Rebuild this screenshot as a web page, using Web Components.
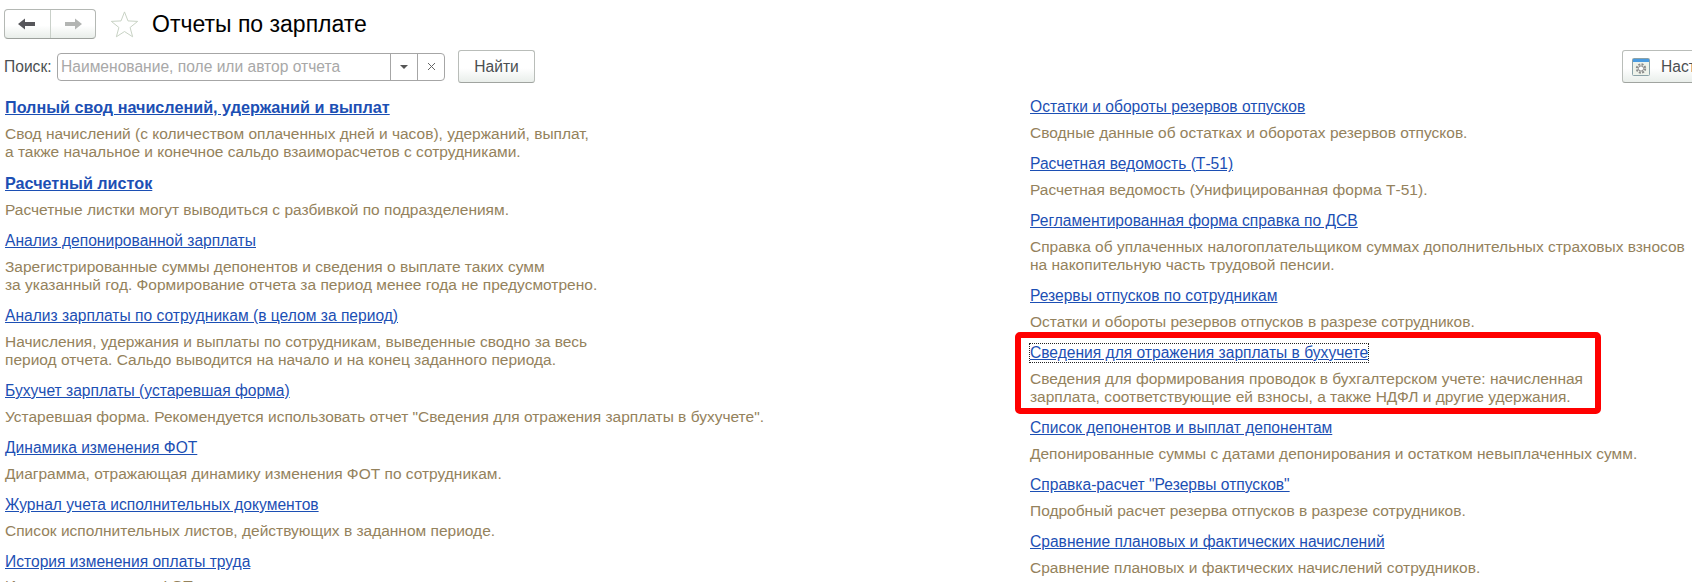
<!DOCTYPE html>
<html>
<head>
<meta charset="utf-8">
<title>Отчеты по зарплате</title>
<style>
    html, body { margin: 0; height: 582px; overflow: hidden; background: #fff; }
    body { font: 15.6px "Liberation Sans", Arial, sans-serif; }
</style>
</head>
<body>
<salary-page>
    <report-item slot="left" strong name="Полный свод начислений, удержаний и выплат">Свод начислений (с количеством оплаченных дней и часов), удержаний, выплат,<br>а также начальное и конечное сальдо взаиморасчетов с сотрудниками.</report-item>
    <report-item slot="left" strong name="Расчетный листок">Расчетные листки могут выводиться с разбивкой по подразделениям.</report-item>
    <report-item slot="left" name="Анализ депонированной зарплаты">Зарегистрированные суммы депонентов и сведения о выплате таких сумм<br>за указанный год. Формирование отчета за период менее года не предусмотрено.</report-item>
    <report-item slot="left" name="Анализ зарплаты по сотрудникам (в целом за период)">Начисления, удержания и выплаты по сотрудникам, выведенные сводно за весь<br>период отчета. Сальдо выводится на начало и на конец заданного периода.</report-item>
    <report-item slot="left" name="Бухучет зарплаты (устаревшая форма)">Устаревшая форма. Рекомендуется использовать отчет "Сведения для отражения зарплаты в бухучете".</report-item>
    <report-item slot="left" name="Динамика изменения ФОТ">Диаграмма, отражающая динамику изменения ФОТ по сотрудникам.</report-item>
    <report-item slot="left" name="Журнал учета исполнительных документов">Список исполнительных листов, действующих в заданном периоде.</report-item>
    <report-item slot="left" style="--desc-gap: 6px" name="История изменения оплаты труда">Изменения оплаты и ФОТ сотрудников.</report-item>

    <report-item slot="right" name="Остатки и обороты резервов отпусков">Сводные данные об остатках и оборотах резервов отпусков.</report-item>
    <report-item slot="right" name="Расчетная ведомость (Т-51)">Расчетная ведомость (Унифицированная форма Т-51).</report-item>
    <report-item slot="right" name="Регламентированная форма справка по ДСВ">Справка об уплаченных налогоплательщиком суммах дополнительных страховых взносов<br>на накопительную часть трудовой пенсии.</report-item>
    <report-item slot="right" name="Резервы отпусков по сотрудникам">Остатки и обороты резервов отпусков в разрезе сотрудников.</report-item>
    <report-item slot="right" focused marked name="Сведения для отражения зарплаты в бухучете">Сведения для формирования проводок в бухгалтерском учете: начисленная<br>зарплата, соответствующие ей взносы, а также НДФЛ и другие удержания.</report-item>
    <report-item slot="right" name="Список депонентов и выплат депонентам">Депонированные суммы с датами депонирования и остатком невыплаченных сумм.</report-item>
    <report-item slot="right" name="Справка-расчет &quot;Резервы отпусков&quot;">Подробный расчет резерва отпусков в разрезе сотрудников.</report-item>
    <report-item slot="right" name="Сравнение плановых и фактических начислений">Сравнение плановых и фактических начислений сотрудников.</report-item>
</salary-page>

<script>
const buttonGradient = 'linear-gradient(#fff 0%, #fff 55%, #e9eeea 100%)';

const navTemplate = document.createElement('template');
navTemplate.innerHTML = `
    <style>
        :host { display: flex; align-items: center; height: 48px; padding-left: 4px; box-sizing: border-box; }
        .nav { display: flex; width: 92px; height: 30px; box-sizing: border-box; border: 1px solid #b4b8b4; border-bottom-color: #9da19d; border-radius: 4px; background: ${buttonGradient}; }
        .nav div { flex: 1; display: flex; align-items: center; justify-content: center; }
        .nav div + div { border-left: 1px solid #c9d0c9; }
        .star { margin: 0 13px 0 14px; }
        h1 { margin: 0; font: 400 23px "Liberation Sans", Arial, sans-serif; color: #000; }
    </style>
    <div class="nav">
        <div><svg width="18" height="12" viewBox="0 0 18 12"><path d="M0 6 7 .5V4h10v4H7v3.5z" fill="#56565a"/></svg></div>
        <div><svg width="18" height="12" viewBox="0 0 18 12"><path d="M18 6 11 .5V4H1v4h10v3.5z" fill="#b3b5b3"/></svg></div>
    </div>
    <svg class="star" width="29" height="28" viewBox="0 0 30 28"><path d="M15 1.5 18.6 10.8 28.6 11.3 20.8 17.6 23.4 27.2 15 21.8 6.6 27.2 9.2 17.6 1.4 11.3 11.4 10.8z" fill="#fff" stroke="#c6d0c2"/></svg>
    <h1><slot></slot></h1>
`;

class TitleBar extends HTMLElement {
    constructor() {
        super();
        this.attachShadow({ mode: 'open' });
        this.shadowRoot.appendChild(navTemplate.content.cloneNode(true));
    }
}

const searchTemplate = document.createElement('template');
searchTemplate.innerHTML = `
    <style>
        :host { display: flex; align-items: center; height: 33px; margin-top: 2px; padding-left: 4px; font: 15.6px "Liberation Sans", Arial, sans-serif; color: #4b4f52; }
        label { width: 53px; }
        .field { display: flex; width: 388px; height: 28px; box-sizing: border-box; border: 1px solid #a6a6a6; border-radius: 4px; background: #fff; }
        .text { flex: 1; padding-left: 3px; line-height: 26px; color: #a8a8a8; }
        .cell { width: 26px; display: flex; align-items: center; justify-content: center; border-left: 1px solid #a6a6a6; }
        button { margin-left: 13px; width: 77px; height: 33px; padding: 0; border: 1px solid #b9bdb9; border-bottom-color: #a0a4a0; border-radius: 3px; font: inherit; color: #4b4f52; background: ${buttonGradient}; }
        .settings { margin-left: auto; margin-right: -50px; width: 120px; display: flex; align-items: center; gap: 11px; padding-left: 9px; box-sizing: border-box; }
    </style>
    <label>Поиск:</label>
    <div class="field">
        <div class="text">Наименование, поле или автор отчета</div>
        <div class="cell"><svg width="8" height="4" viewBox="0 0 8 4"><path d="M0 0h8L4 4z" fill="#555"/></svg></div>
        <div class="cell"><svg width="9" height="9" viewBox="0 0 9 9"><path d="M1 1l7 7M8 1 1 8" stroke="#666" fill="none"/></svg></div>
    </div>
    <button>Найти</button>
    <button class="settings">
        <svg width="18" height="18" viewBox="0 0 18 18">
            <rect x=".5" y=".5" width="17" height="17" rx="1" fill="#eef2ea" stroke="#8ba2a8"/>
            <rect x="1" y="1" width="16" height="3" fill="#4a9be0"/>
            <circle cx="9" cy="10.5" r="4.2" fill="none" stroke="#8a8a8a" stroke-width="2" stroke-dasharray="2 1.3"/>
            <circle cx="9" cy="10.5" r="2.6" fill="#fff" stroke="#8a8a8a"/>
        </svg>
        <span>Настройки</span>
    </button>
`;

class SearchBar extends HTMLElement {
    constructor() {
        super();
        this.attachShadow({ mode: 'open' });
        this.shadowRoot.appendChild(searchTemplate.content.cloneNode(true));
    }
}

const itemTemplate = document.createElement('template');
itemTemplate.innerHTML = `
    <style>
        :host { display: block; position: relative; font: 15.5px/18px "Liberation Sans", Arial, sans-serif; margin-bottom: 13px; }
        a { display: block; width: max-content; color: #1c4fb4; text-decoration: underline; font-size: 15.6px; line-height: 18px; cursor: pointer; }
        :host([strong]) a { font-weight: 700; font-size: 16.2px; line-height: 19px; }
        :host([focused]) a { outline: 1px dotted #222; outline-offset: 0; }
        .desc { margin-top: var(--desc-gap, 8px); color: #94825c; white-space: nowrap; }
        .mark { display: none; position: absolute; left: -15px; top: -12px; bottom: -8px; width: 586px; box-sizing: border-box; border: 6px solid #f00; border-radius: 5px; pointer-events: none; }
        :host([marked]) .mark { display: block; }
    </style>
    <a></a>
    <div class="desc"><slot></slot></div>
    <div class="mark"></div>
`;

class ReportItem extends HTMLElement {
    constructor() {
        super();
        this.attachShadow({ mode: 'open' });
        this.shadowRoot.appendChild(itemTemplate.content.cloneNode(true));
        this.shadowRoot.querySelector('a').innerText = this.getAttribute('name');
    }
}

const pageTemplate = document.createElement('template');
pageTemplate.innerHTML = `
    <style>
        :host { display: block; width: 1692px; height: 582px; overflow: hidden; }
        .columns { display: grid; grid-template-columns: 1030px 1fr; padding-top: 15px; }
        .col:first-child { padding-left: 5px; }
    </style>
    <title-bar>Отчеты по зарплате</title-bar>
    <search-bar></search-bar>
    <div class="columns">
        <div class="col"><slot name="left"></slot></div>
        <div class="col"><slot name="right"></slot></div>
    </div>
`;

class SalaryPage extends HTMLElement {
    constructor() {
        super();
        this.attachShadow({ mode: 'open' });
        this.shadowRoot.appendChild(pageTemplate.content.cloneNode(true));
    }
}

window.customElements.define('title-bar', TitleBar);
window.customElements.define('search-bar', SearchBar);
window.customElements.define('report-item', ReportItem);
window.customElements.define('salary-page', SalaryPage);
</script>
</body>
</html>
